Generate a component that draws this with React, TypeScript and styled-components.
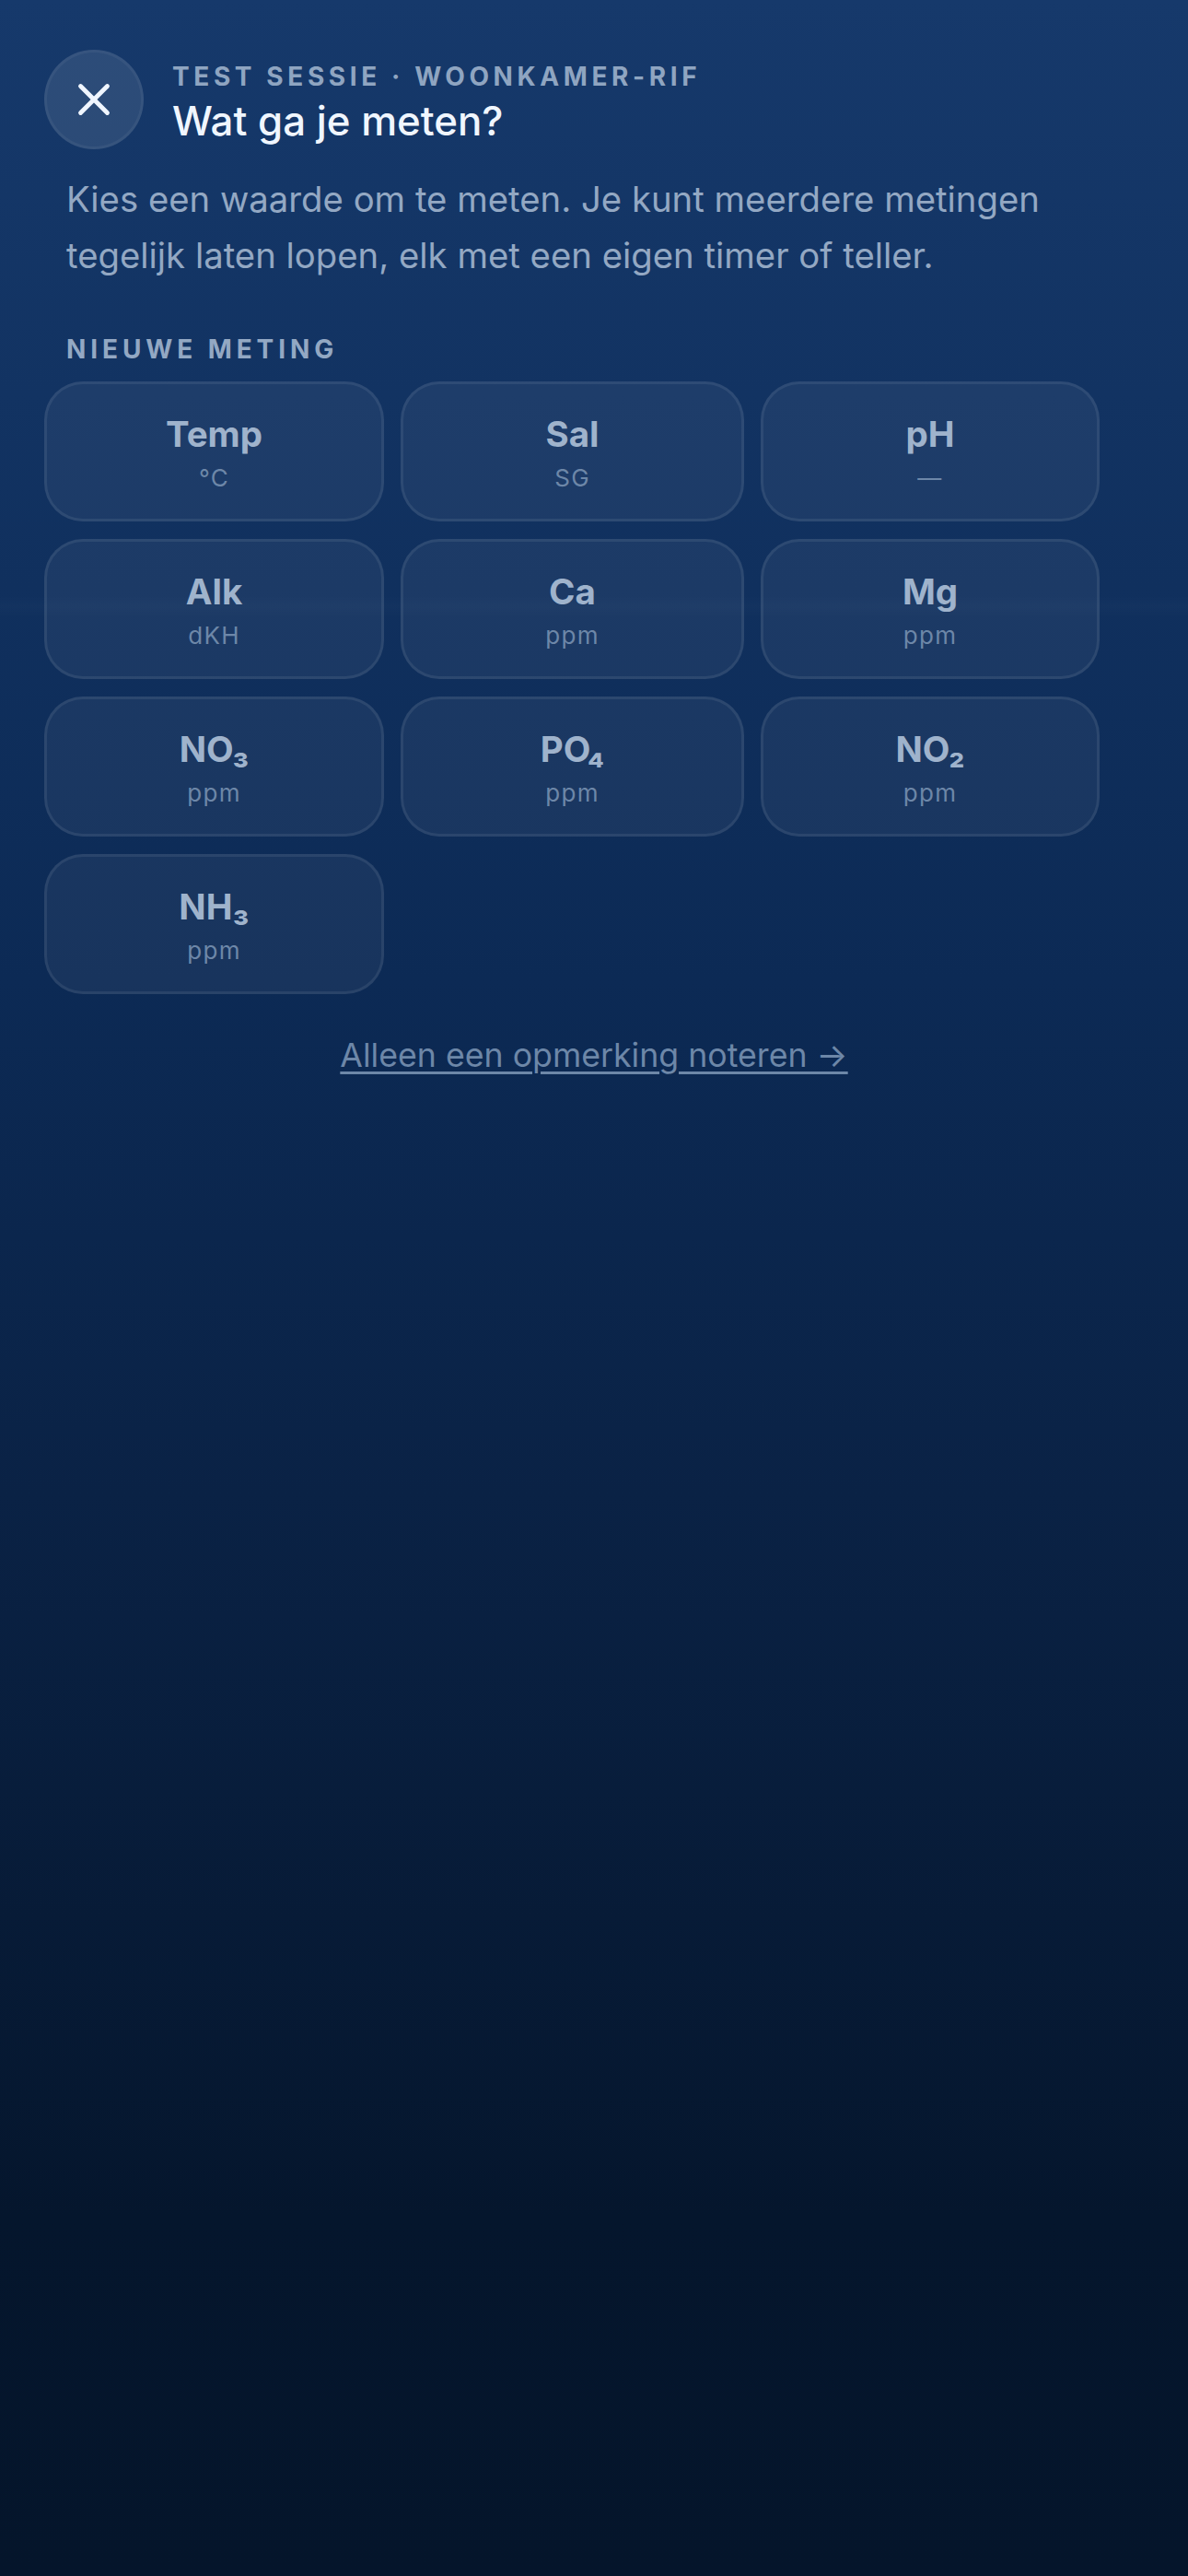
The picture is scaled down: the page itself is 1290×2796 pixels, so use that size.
import React from 'react';
import styled, { createGlobalStyle } from 'styled-components';
import { X } from 'lucide-react';

const metrics = [
  { name: 'Temp', unit: '°C' },
  { name: 'Sal', unit: 'SG' },
  { name: 'pH', unit: '—' },
  { name: 'Alk', unit: 'dKH' },
  { name: 'Ca', unit: 'ppm' },
  { name: 'Mg', unit: 'ppm' },
  { name: 'NO₃', unit: 'ppm' },
  { name: 'PO₄', unit: 'ppm' },
  { name: 'NO₂', unit: 'ppm' },
  { name: 'NH₃', unit: 'ppm' },
];

const GlobalStyle = createGlobalStyle`
  html, body {
    margin: 0;
    padding: 0;
    background: #041529;
  }
  * {
    box-sizing: border-box;
  }
`;

const Page = styled.div`
  position: relative;
  width: 1290px;
  height: 2796px;
  overflow: hidden;
  padding: 54px 96px 0 48px;
  font-family: Inter, 'Liberation Sans', sans-serif;
  background: linear-gradient(180deg, #16396b 0%, #0c2a55 38%, #0a2245 58%, #05162d 86%, #05152b 100%);
`;

/* faint light streak across the background */
const Streak = styled.div`
  position: absolute;
  left: 0;
  right: 0;
  top: 646px;
  height: 24px;
  background: linear-gradient(180deg, transparent, rgba(255, 255, 255, 0.016), transparent);
  pointer-events: none;
`;

const Header = styled.header`
  position: relative;
  display: flex;
  align-items: center;
  gap: 31px;
`;

const CloseButton = styled.button`
  flex: none;
  width: 108px;
  height: 108px;
  padding: 0;
  display: flex;
  align-items: center;
  justify-content: center;
  border-radius: 50%;
  border: 3px solid rgba(255, 255, 255, 0.05);
  background: rgba(255, 255, 255, 0.1);
  color: #f0f6ff;
`;

const HeaderText = styled.div`
  margin-top: 6px;
  display: flex;
  flex-direction: column;
  gap: 5px;
`;

const Eyebrow = styled.div`
  font-size: 28px;
  line-height: 36px;
  font-weight: 700;
  letter-spacing: 4.6px;
  color: #8fa5c1;
  white-space: nowrap;
`;

const Title = styled.h1`
  margin: 0;
  font-size: 43.8px;
  line-height: 52px;
  font-weight: 550;
  color: #f0f6ff;
`;

const Intro = styled.p`
  position: relative;
  margin: 24px 0 0 24px;
  font-size: 38.3px;
  line-height: 61px;
  color: #93a8c3;
`;

const SectionLabel = styled.div`
  position: relative;
  margin: 53px 0 0 24px;
  font-size: 28px;
  line-height: 36px;
  font-weight: 700;
  letter-spacing: 4.9px;
  color: #93a8c3;
`;

const MetricGrid = styled.div`
  position: relative;
  margin-top: 17px;
  display: grid;
  grid-template-columns: 369px 373px 368px;
  gap: 19px 18px;
`;

const MetricCard = styled.button`
  height: 152px;
  padding: 2px 0 0;
  display: flex;
  flex-direction: column;
  align-items: center;
  justify-content: center;
  gap: 9px;
  border-radius: 42px;
  border: 3px solid rgba(255, 255, 255, 0.08);
  background: rgba(255, 255, 255, 0.05);
  font-family: inherit;
`;

const MetricName = styled.span`
  font-size: 38.5px;
  line-height: 46px;
  font-weight: 700;
  color: #9fb3cc;
`;

const MetricUnit = styled.span`
  font-size: 26px;
  line-height: 32px;
  letter-spacing: 1.3px;
  color: #6d87a8;
`;

const NoteRow = styled.div`
  position: relative;
  margin: 42px -48px 0 0;
  display: flex;
  justify-content: center;
`;

const NoteLink = styled.a`
  font-size: 35.7px;
  line-height: 48px;
  color: #6d87a8;
  text-decoration: underline;
  text-underline-offset: 5px;
  text-decoration-thickness: 3px;
`;

export default function App() {
  return (
    <>
      <GlobalStyle />
      <Page>
        <Streak />
        <Header>
          <CloseButton aria-label="Sluiten">
            <X size={58} strokeWidth={2} />
          </CloseButton>
          <HeaderText>
            <Eyebrow>TEST SESSIE · WOONKAMER-RIF</Eyebrow>
            <Title>Wat ga je meten?</Title>
          </HeaderText>
        </Header>
        <Intro>
          Kies een waarde om te meten. Je kunt meerdere metingen tegelijk laten lopen, elk met een eigen timer of teller.
        </Intro>
        <SectionLabel>NIEUWE METING</SectionLabel>
        <MetricGrid>
          {metrics.map((m) => (
            <MetricCard key={m.name}>
              <MetricName>{m.name}</MetricName>
              <MetricUnit>{m.unit}</MetricUnit>
            </MetricCard>
          ))}
        </MetricGrid>
        <NoteRow>
          <NoteLink>Alleen een opmerking noteren →</NoteLink>
        </NoteRow>
      </Page>
    </>
  );
}
